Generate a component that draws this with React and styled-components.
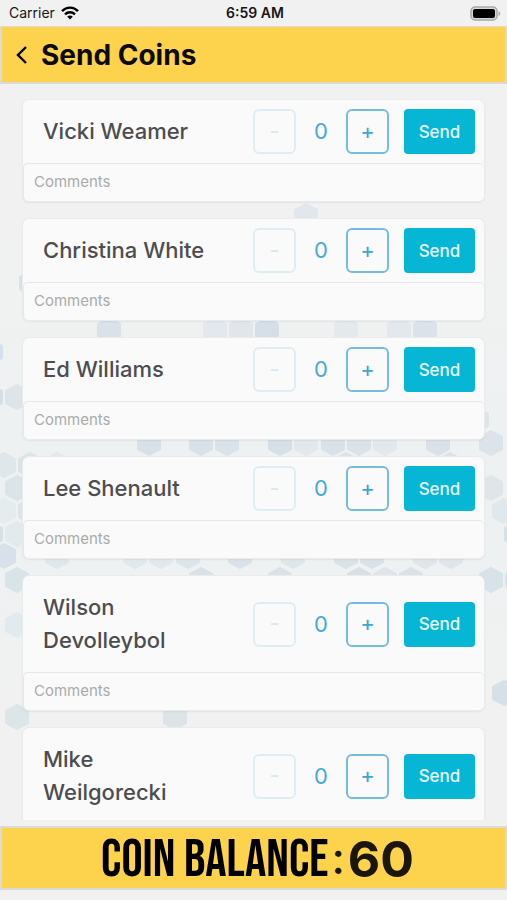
import React, { useState } from "react";
import styled, { createGlobalStyle } from "styled-components";

const GlobalStyle = createGlobalStyle`
  * {
    box-sizing: border-box;
  }
  body {
    margin: 0;
    background: #f1f1f1;
    font-family: Inter, "Noto Sans", sans-serif;
  }
  button, input {
    font-family: inherit;
  }
`;

const Screen = styled.div`
  display: flex;
  flex-direction: column;
  height: 100vh;
  padding-bottom: 10px;
`;
const StatusBar = styled.div`
  display: grid;
  grid-template-columns: 1fr auto 1fr;
  align-items: center;
  height: 26px;
  padding: 0 6px 0 9px;
  color: #161616;
  font-size: 14px;
  line-height: 20px;
`;
const StatusSide = styled.div`
  display: flex;
  align-items: center;
  justify-content: ${(props) => (props.$end ? "flex-end" : "flex-start")};
  gap: 6px;
`;
const Clock = styled.span`
  font-weight: 600;
`;
const Header = styled.header`
  display: flex;
  align-items: center;
  gap: 11px;
  height: 58px;
  padding: 0 12px;
  background: #fdd24c;
  border: 2px solid #dcdad4;
  border-top-width: 1px;
`;
const BackButton = styled.button`
  display: flex;
  padding: 0;
  border: none;
  background: none;
  color: #000;
  cursor: pointer;
`;
const Title = styled.h1`
  margin: 0;
  font-size: 28px;
  line-height: 36px;
  font-weight: 700;
  color: #0c0a04;
`;
const ListArea = styled.main`
  position: relative;
  flex: 1;
  min-height: 0;
  margin-bottom: 6px;
  overflow: hidden;
`;
const Backdrop = styled.svg`
  position: absolute;
  top: 0;
  left: 0;
  width: 100%;
  height: 100%;
`;
const List = styled.ul`
  position: relative;
  display: flex;
  flex-direction: column;
  gap: 16px;
  height: 100%;
  margin: 0;
  padding: 15px 22px;
  list-style: none;
  overflow-y: auto;
  scrollbar-width: none;
`;
const Card = styled.li`
  flex-shrink: 0;
  background: #fafafa;
  border: 1px solid #e9ebec;
  border-radius: 7px;
  box-shadow: 0 1px 2px rgba(0, 0, 0, 0.06);
`;
const CardRow = styled.div`
  display: flex;
  align-items: center;
  padding: 0 9px 0 20px;
`;
const Name = styled.h2`
  flex: 1;
  margin: 0;
  padding: 15px 45px 15px 0;
  font-size: 22px;
  line-height: 33px;
  font-weight: 500;
  color: #4d4d50;
`;
const StepButton = styled.button`
  width: 43px;
  height: 45px;
  padding: 0 0 2px;
  border: 2px solid #74bde1;
  border-radius: 6px;
  background: transparent;
  color: #3ba6d8;
  font-size: 22px;
  cursor: pointer;
  &:disabled {
    opacity: 0.2;
    cursor: default;
  }
`;
const Amount = styled.output`
  width: 50px;
  text-align: center;
  font-size: 22px;
  line-height: 33px;
  color: #47a9da;
`;
const SendButton = styled.button`
  width: 71px;
  height: 45px;
  margin-left: 15px;
  padding: 0;
  border: none;
  border-radius: 4px;
  background: #06b6d4;
  color: #e9fbff;
  font-size: 17px;
  font-weight: 500;
  cursor: pointer;
`;
const Comments = styled.input`
  display: block;
  width: 100%;
  height: 38px;
  padding: 0 10px 2px;
  border: 1px solid #e6e7e8;
  border-width: 1px 0 0 1px;
  border-radius: 5px;
  background: #fafafa;
  color: #4d4d50;
  font-size: 15px;
  outline: none;
  &::placeholder {
    color: #ababab;
    opacity: 1;
  }
`;
const Footer = styled.footer`
  display: flex;
  align-items: center;
  justify-content: center;
  height: 64px;
  padding-left: 8px;
  background: #fdd24c;
  border: 2px solid #dcdad4;
`;
const BalanceLabel = styled.span`
  padding-top: 4px;
  font-family: "Bebas Neue", "Liberation Sans", sans-serif;
  font-size: 53px;
  line-height: 60px;
  font-weight: 400;
  color: #000;
`;
const Colon = styled.span`
  padding: 0 3px;
  font-size: 44px;
  line-height: 60px;
  font-weight: 500;
  color: #1a1608;
`;
const Balance = styled.span`
  padding-top: 2px;
  font-size: 50px;
  line-height: 60px;
  font-weight: 700;
  color: #1a1608;
`;

// [x, y, color]
const hexagons = [
  [306, 132, "#e2e7ed"],
  [31, 199, "#d7e3e9"],
  [109, 246, "#d9e1e9"],
  [215, 246, "#e2e8ee"],
  [241, 246, "#e0e6ec"],
  [267, 246, "#d6dfe8"],
  [346, 246, "#e4e9ec"],
  [399, 246, "#e2e8ed"],
  [425, 246, "#dce2e9"],
  [-9, 268, "#d5e2ed"],
  [-9, 313, "#d5e0e6"],
  [17, 313, "#dde5e9"],
  [149, 359, "#d8e1e9"],
  [201, 359, "#d8e2e8"],
  [227, 359, "#dae3ea"],
  [280, 359, "#d6e0e9"],
  [306, 359, "#e2e8ec"],
  [333, 359, "#d9e1e9"],
  [359, 359, "#dbe2e8"],
  [385, 359, "#e2e8ec"],
  [438, 359, "#dae1e8"],
  [491, 359, "#dce3ea"],
  [477, 336, "#dfe4e5"],
  [4, 381, "#dfe7eb"],
  [30, 381, "#dbe5e8"],
  [57, 381, "#e2e8eb"],
  [346, 381, "#dce2e7"],
  [450, 381, "#dce2e7"],
  [17, 404, "#dbe4e9"],
  [491, 404, "#e0e5e9"],
  [4, 427, "#e5ecee"],
  [30, 427, "#dbe5ea"],
  [504, 427, "#dfe8ec"],
  [-9, 450, "#d5e0e6"],
  [17, 450, "#e3eaed"],
  [516, 450, "#d7e0e8"],
  [4, 472, "#d8e0e9"],
  [57, 472, "#e0e7ea"],
  [135, 472, "#e1e8eb"],
  [161, 472, "#e1e8eb"],
  [188, 472, "#dce5e9"],
  [240, 472, "#d9e2e9"],
  [293, 472, "#dfe6eb"],
  [346, 472, "#dae2e8"],
  [372, 472, "#d9e1e9"],
  [425, 472, "#dfe5e9"],
  [451, 472, "#dfe5e9"],
  [17, 496, "#d8e4e8"],
  [201, 496, "#dae2e8"],
  [280, 496, "#dae2e7"],
  [359, 496, "#d8e0e6"],
  [385, 496, "#dfe6e9"],
  [411, 496, "#dae1e7"],
  [491, 496, "#d8e2e9"],
  [517, 496, "#d8e2e9"],
  [17, 541, "#e1eaee"],
  [504, 609, "#d6e0e8"],
  [17, 633, "#dce6e9"],
  [175, 633, "#dce4e8"],
];

const people = [
  "Vicki Weamer",
  "Christina White",
  "Ed Williams",
  "Lee Shenault",
  "Wilson Devolleybol",
  "Mike Weilgorecki",
];

const WifiIcon = () => (
  <svg width="18" height="14" viewBox="0 0 18 14" fill="none" stroke="#000" strokeWidth="2.4">
    <path d="M1 5.1C5.5.5 12.5.5 17 5.1" />
    <path d="M4 8.3C6.8 5.5 11.2 5.5 14 8.3" />
    <path d="M9 13.5L6.2 10.7C7.8 9.2 10.2 9.2 11.8 10.7Z" fill="#000" stroke="none" />
  </svg>
);

const BatteryIcon = () => (
  <svg width="31" height="15" viewBox="0 0 31 15">
    <rect x="1" y="1" width="26" height="13" rx="4" fill="#d8d8d8" stroke="#a9a9a9" strokeWidth="1.5" />
    <rect x="3" y="3" width="22" height="9" rx="2" fill="#000" />
    <path d="M28.5 5.2C30.8 6 30.8 9 28.5 9.8Z" fill="#a9a9a9" />
  </svg>
);

const HexBackdrop = () => (
  <Backdrop viewBox="0 0 507 736" preserveAspectRatio="xMidYMin slice" aria-hidden="true">
    <defs>
      <linearGradient id="mist" x1="0" y1="0" x2="0" y2="1">
        <stop offset="0.2" stopColor="#edf1f2" stopOpacity="0" />
        <stop offset="0.55" stopColor="#edf1f2" />
        <stop offset="0.85" stopColor="#edf1f2" stopOpacity="0" />
      </linearGradient>
    </defs>
    <rect width="507" height="736" fill="url(#mist)" />
    {hexagons.map(([x, y, color]) => (
      <path
        key={`${x},${y}`}
        transform={`translate(${x} ${y})`}
        d="M0-12.5L11.5-6.5V6.5L0 12.5L-11.5 6.5V-6.5Z"
        fill={color}
        stroke={color}
        strokeLinejoin="round"
      />
    ))}
  </Backdrop>
);

const PersonCard = ({ name, balance, onSend }) => {
  const [amount, setAmount] = useState(0);

  const handleSend = () => {
    onSend(amount);
    setAmount(0);
  };

  return (
    <Card>
      <CardRow>
        <Name>{name}</Name>
        <StepButton
          aria-label="Less"
          disabled={amount === 0}
          onClick={() => setAmount(amount - 1)}
        >
          -
        </StepButton>
        <Amount>{amount}</Amount>
        <StepButton
          aria-label="More"
          disabled={amount >= balance}
          onClick={() => setAmount(amount + 1)}
        >
          +
        </StepButton>
        <SendButton onClick={handleSend}>Send</SendButton>
      </CardRow>
      <Comments placeholder="Comments" aria-label={`Comments for ${name}`} />
    </Card>
  );
};

const App = () => {
  const [balance, setBalance] = useState(60);

  return (
    <Screen>
      <GlobalStyle />
      <StatusBar>
        <StatusSide>
          Carrier <WifiIcon />
        </StatusSide>
        <Clock>6:59 AM</Clock>
        <StatusSide $end>
          <BatteryIcon />
        </StatusSide>
      </StatusBar>
      <Header>
        <BackButton aria-label="Back">
          <svg width="16" height="20" viewBox="0 0 16 20" fill="none" stroke="currentColor" strokeWidth="2.4">
            <path d="M12 2L4 10L12 18" />
          </svg>
        </BackButton>
        <Title>Send Coins</Title>
      </Header>
      <ListArea>
        <HexBackdrop />
        <List>
          {people.map((name) => (
            <PersonCard
              key={name}
              name={name}
              balance={balance}
              onSend={(amount) => setBalance(balance - amount)}
            />
          ))}
        </List>
      </ListArea>
      <Footer>
        <BalanceLabel>COIN BALANCE</BalanceLabel>
        <Colon>:</Colon>
        <Balance>{balance}</Balance>
      </Footer>
    </Screen>
  );
};

export default App;
